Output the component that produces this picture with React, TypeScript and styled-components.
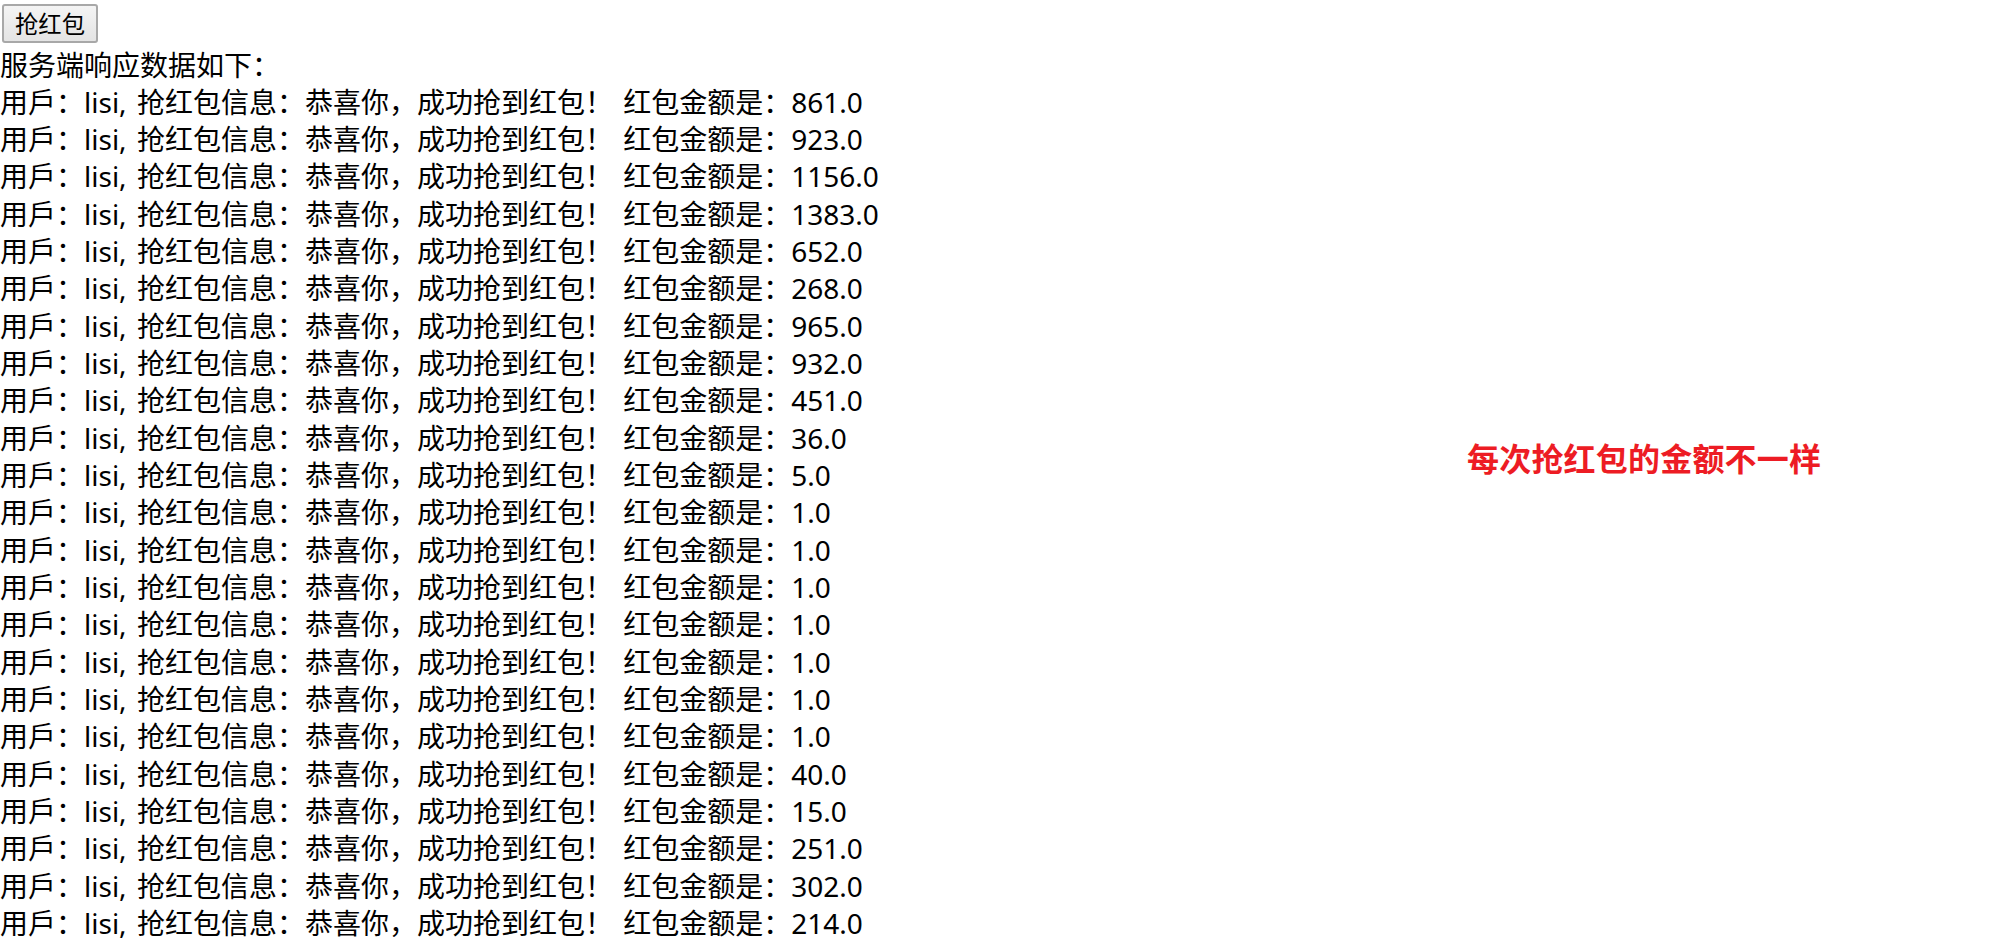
import React from "react";
import styled, { createGlobalStyle } from "styled-components";

const GlobalStyle = createGlobalStyle`
  html, body {
    margin: 0;
    padding: 0;
    background: #ffffff;
  }
  body {
    font-family: "Noto Sans CJK SC", sans-serif;
    color: #000000;
  }
`;

const Page = styled.div`
  position: relative;
  width: 2010px;
  height: 952px;
  overflow: hidden;
  font-family: "Noto Sans CJK SC", sans-serif;
`;

const ButtonRow = styled.div`
  height: 45.5px;
  padding: 4px 0 0 2px;
  box-sizing: border-box;
`;

const GrabButton = styled.button`
  box-sizing: border-box;
  width: 96px;
  height: 39px;
  padding: 0 10px;
  font-family: "Noto Sans CJK SC", sans-serif;
  font-size: 23.3px;
  line-height: 1;
  color: #000;
  background: linear-gradient(#f4f4f4, #e4e4e4);
  border: 2px solid #a8a8a8;
  border-radius: 3px;
  cursor: pointer;
`;

const Log = styled.div`
  display: flex;
  flex-direction: column;
  font-size: 28px;
  line-height: 37.33px;
  white-space: pre;
`;

const Line = styled.div`
  height: 37.33px;
`;

const Latin = styled.span`
  font-family: "Noto Sans", "Open Sans", sans-serif;
  word-spacing: 3px;
`;

const Note = styled.div`
  position: absolute;
  left: 1467px;
  top: 434px;
  font-family: "Noto Sans CJK SC", sans-serif;
  font-size: 32px;
  line-height: 46px;
  font-weight: 700;
  color: rgb(237, 28, 36);
  letter-spacing: 0.2px;
`;

const amounts = [
  "861.0", "923.0", "1156.0", "1383.0", "652.0", "268.0", "965.0", "932.0",
  "451.0", "36.0", "5.0", "1.0", "1.0", "1.0", "1.0", "1.0", "1.0", "1.0",
  "40.0", "15.0", "251.0", "302.0", "214.0",
];

export default function App() {
  return (
    <Page>
      <GlobalStyle />
      <ButtonRow>
        <GrabButton>抢红包</GrabButton>
      </ButtonRow>
      <Log>
        <Line>服务端响应数据如下：</Line>
        {amounts.map((a, i) => (
          <Line key={i}>
            用戶：<Latin>lisi, </Latin>抢红包信息：恭喜你，成功抢到红包！<Latin> </Latin>红包金额是：<Latin>{a}</Latin>
          </Line>
        ))}
      </Log>
      <Note>每次抢红包的金额不一样</Note>
    </Page>
  );
}
